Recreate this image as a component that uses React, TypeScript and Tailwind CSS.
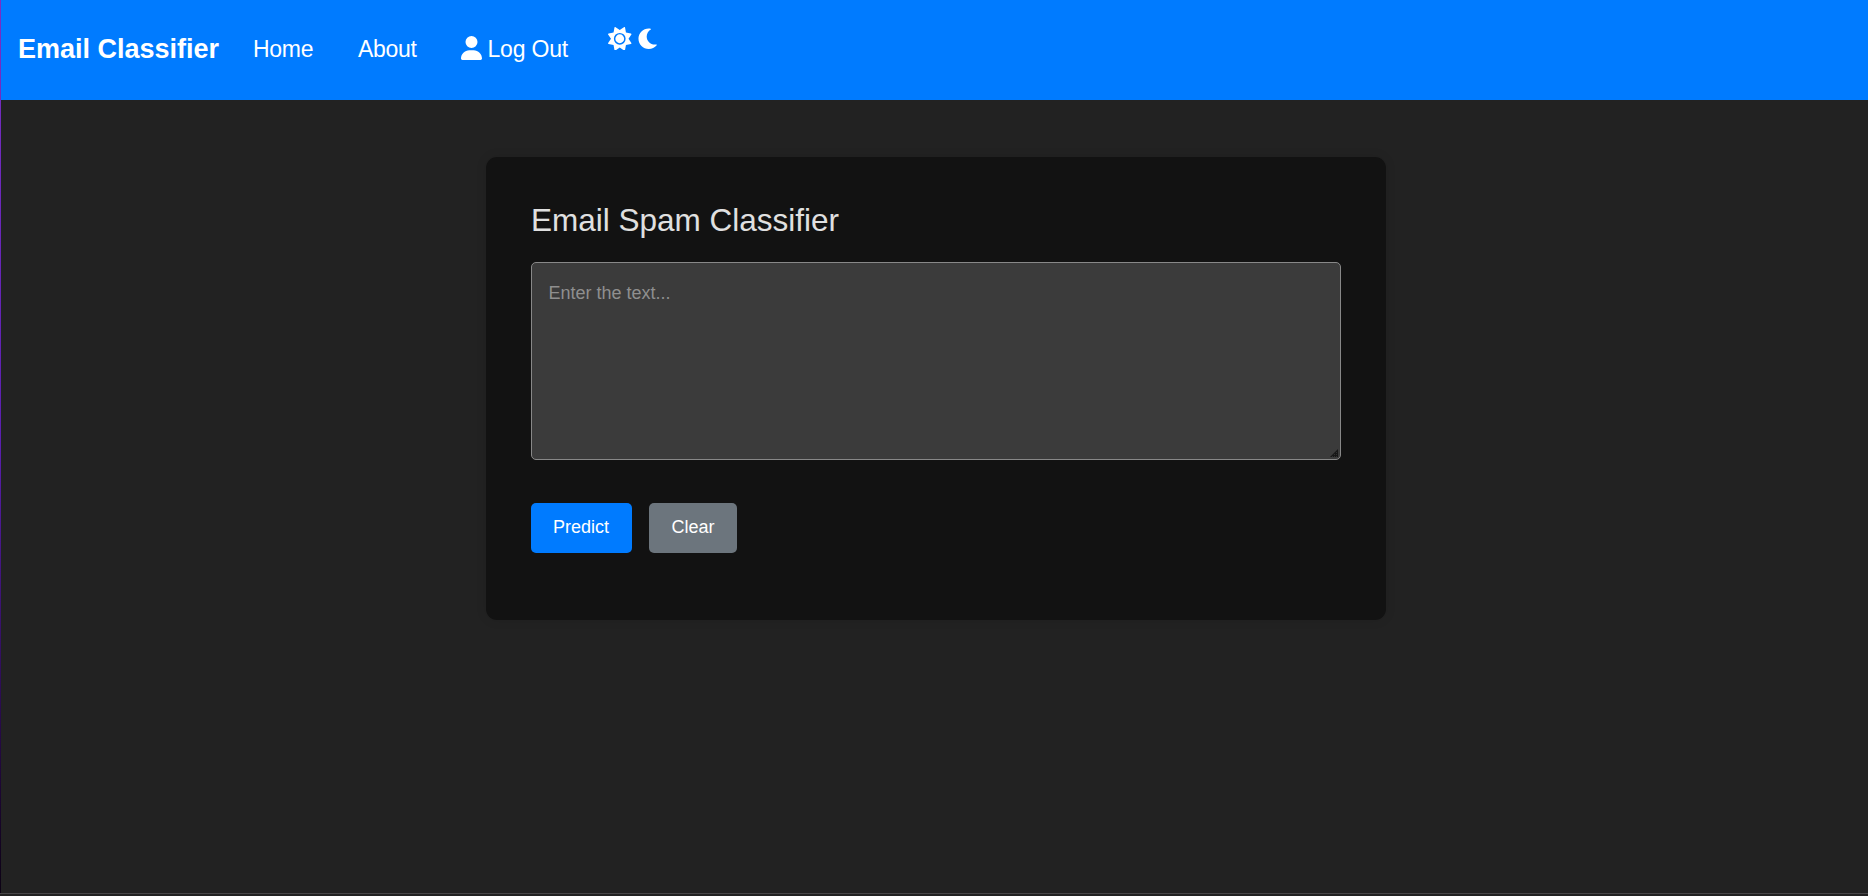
import { FaSun, FaUser } from 'react-icons/fa6';

function MoonIcon({ className }: { className?: string }) {
  return (
    <svg className={className} viewBox="0 0 512 512" fill="currentColor">
      <path d="M32 256c0-123.8 100.3-224 223.8-224c11.36 0 29.7 1.668 40.9 3.746c9.616 1.777 11.75 14.63 3.279 19.44C245 86.5 211.2 144.6 211.2 207.8c0 109.7 99.71 193 208.3 172.3c9.561-1.805 16.28 9.324 10.11 16.95C387.9 448.6 324.8 480 255.8 480C132.1 480 32 379.8 32 256z" />
    </svg>
  );
}

export default function App() {
  return (
    <div className="flex h-[896px] w-full flex-col overflow-hidden bg-[#222222] font-['Liberation_Sans',Arial,sans-serif]">
      <div className="flex min-h-0 flex-1">
        <div className="w-px shrink-0 bg-linear-to-b from-[#7b2fc4] via-[#5a1fae] via-50% to-[#0c0214]" />
        <div className="flex min-w-0 flex-1 flex-col">
          <header className="flex h-[100px] shrink-0 items-start bg-[#007bff] pl-[17px] text-white">
            <span className="mt-[29px] w-[235px] text-[27px] leading-[40px] font-bold whitespace-nowrap">Email Classifier</span>
            <a className="mt-[31px] w-[105px] text-[23px] leading-[36px] tracking-[-0.3px] whitespace-nowrap">Home</a>
            <a className="mt-[31px] w-[103px] text-[23px] leading-[36px] tracking-[-0.3px] whitespace-nowrap">About</a>
            <a className="mt-[31px] flex w-[147px] text-[23px] leading-[36px] tracking-[-0.2px] whitespace-nowrap">
              <FaUser className="mt-[5px] mr-[5.5px] h-[24px] w-[21px] shrink-0" />
              Log Out
            </a>
            <div className="mt-[26.5px] flex gap-[5px]">
              <FaSun className="h-[23.5px] w-[23.5px]" />
              <MoonIcon className="h-[23.5px] w-[23.5px]" />
            </div>
          </header>
          <main className="flex min-h-0 flex-1 items-start pt-[57px] pl-[485px]">
            <section className="h-[463px] w-[900px] rounded-[11px] bg-[#121212] px-[45px] pt-[43px] shadow-[0_0_11px_rgba(0,0,0,0.1)]">
              <h1 className="text-[31.5px] leading-[40px] text-[#e0e0e0]">Email Spam Classifier</h1>
              <div className="relative mt-[22px]">
                <textarea
                  placeholder="Enter the text..."
                  className="block h-[198px] w-[810px] resize-none rounded-[5px] border border-[#888888] bg-[#3b3b3b] px-[16.5px] py-[17px] text-[18px] leading-[27px] text-[#e0e0e0] placeholder:text-[#8f8f8f]"
                />
                <svg className="absolute right-[3px] bottom-[3px] h-[8px] w-[8px]" viewBox="0 0 8 8">
                  <path d="M8 0V8H0Z" fill="#171717" />
                  <path d="M2 7.5H8M4 5.5H8M6 3.5H8" stroke="#303030" strokeWidth="1" strokeDasharray="1 1" />
                </svg>
              </div>
              <div className="mt-[43px] flex gap-[17px] text-[18px] text-white">
                <button className="h-[50px] w-[101px] rounded-[5px] bg-[#007bff] pr-[1px] pb-[1px]">Predict</button>
                <button className="h-[50px] w-[88px] rounded-[5px] bg-[#6c757d] pb-[1px]">Clear</button>
              </div>
            </section>
          </main>
        </div>
      </div>
      <div className="h-px shrink-0 bg-[#484648]" />
      <div className="h-[2px] shrink-0 bg-[#222222]" />
    </div>
  );
}
